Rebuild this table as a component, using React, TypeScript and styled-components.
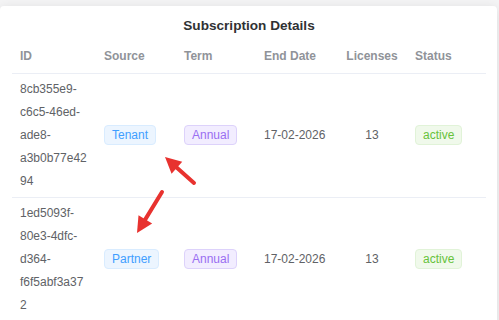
import React from "react";
import styled, { createGlobalStyle } from "styled-components";

const Global = createGlobalStyle`
  html, body { margin: 0; padding: 0; }
  body {
    background: #f4f4f5;
    font-family: "Liberation Sans", Arial, sans-serif;
    width: 499px;
    height: 320px;
    overflow: hidden;
  }
`;

const Page = styled.div`
  position: relative;
  width: 499px;
  height: 320px;
  overflow: hidden;
  padding-top: 6px;
  box-sizing: border-box;
`;

const Card = styled.div`
  width: 497px;
  min-height: 330px;
  background: #fff;
  border-radius: 4px 4px 0 0;
  box-shadow: 0 2px 12px rgba(0, 0, 0, 0.1);
  padding: 10px 11px 0 12px;
  box-sizing: border-box;
`;

const Title = styled.div`
  text-align: center;
  font-size: 13.6px;
  font-weight: bold;
  color: #303133;
  line-height: 20px;
  padding-bottom: 4px;
`;

const Table = styled.table`
  width: 474px;
  table-layout: fixed;
  border-collapse: collapse;
  font-size: 12px;
`;

const Th = styled.th<{ $center?: boolean }>`
  height: 33px;
  padding: 0 8px;
  text-align: ${(p) => (p.$center ? "center" : "left")};
  color: #909399;
  font-weight: bold;
  border-bottom: 1px solid #ebeef5;
  box-sizing: border-box;
`;

const Td = styled.td<{ $center?: boolean }>`
  padding: 4px 8px;
  line-height: 23px;
  color: #606266;
  vertical-align: middle;
  text-align: ${(p) => (p.$center ? "center" : "left")};
  border-bottom: 1px solid #ebeef5;
  overflow-wrap: anywhere;
`;

const tagColors = {
  blue: { bg: "#ecf5ff", border: "#d9ecff", fg: "#409eff" },
  purple: { bg: "#f2edff", border: "#ddd2fb", fg: "#9a6ef2" },
  green: { bg: "#f0f9eb", border: "#e1f3d8", fg: "#67c23a" },
};

const Tag = styled.span<{ $tone: keyof typeof tagColors }>`
  display: inline-block;
  height: 20px;
  line-height: 18px;
  padding: 0 7px;
  font-size: 12px;
  border-radius: 4px;
  box-sizing: border-box;
  vertical-align: middle;
  background: ${(p) => tagColors[p.$tone].bg};
  border: 1px solid ${(p) => tagColors[p.$tone].border};
  color: ${(p) => tagColors[p.$tone].fg};
`;

const Overlay = styled.svg`
  position: absolute;
  left: 0;
  top: 0;
  pointer-events: none;
`;

const rows = [
  { id: "8cb355e9-c6c5-46ed-ade8-a3b0b77e4294", source: "Tenant" },
  { id: "1ed5093f-80e3-4dfc-d364-f6f5abf3a372", source: "Partner" },
];

function Arrow({ x1, y1, x2, y2 }: { x1: number; y1: number; x2: number; y2: number }) {
  const dx = x2 - x1;
  const dy = y2 - y1;
  const len = Math.hypot(dx, dy);
  const ux = dx / len;
  const uy = dy / len;
  const headLen = 16;
  const headW = 8;
  const bx = x2 - ux * headLen;
  const by = y2 - uy * headLen;
  const px = -uy;
  const py = ux;
  const pts = `${x2},${y2} ${bx + px * headW},${by + py * headW} ${bx - px * headW},${by - py * headW}`;
  return (
    <g>
      <line x1={x1} y1={y1} x2={bx + ux * 3} y2={by + uy * 3} stroke="#e8322f" strokeWidth={4} strokeLinecap="round" />
      <polygon points={pts} fill="#e8322f" />
    </g>
  );
}

export default function App() {
  return (
    <>
      <Global />
      <Page>
        <Card>
          <Title>Subscription Details</Title>
          <Table>
            <colgroup>
              <col style={{ width: 84 }} />
              <col style={{ width: 80 }} />
              <col style={{ width: 80 }} />
              <col style={{ width: 81 }} />
              <col style={{ width: 70 }} />
              <col style={{ width: 79 }} />
            </colgroup>
            <thead>
              <tr>
                <Th>ID</Th>
                <Th>Source</Th>
                <Th>Term</Th>
                <Th>End Date</Th>
                <Th $center>Licenses</Th>
                <Th>Status</Th>
              </tr>
            </thead>
            <tbody>
              {rows.map((r) => (
                <tr key={r.id}>
                  <Td>{r.id}</Td>
                  <Td>
                    <Tag $tone="blue">{r.source}</Tag>
                  </Td>
                  <Td>
                    <Tag $tone="purple">Annual</Tag>
                  </Td>
                  <Td>17-02-2026</Td>
                  <Td $center>13</Td>
                  <Td>
                    <Tag $tone="green">active</Tag>
                  </Td>
                </tr>
              ))}
            </tbody>
          </Table>
        </Card>
        <Overlay width={499} height={320} viewBox="0 0 499 320">
          <Arrow x1={194} y1={183} x2={165} y2={157} />
          <Arrow x1={162} y1={192} x2={137} y2={233} />
        </Overlay>
      </Page>
    </>
  );
}
